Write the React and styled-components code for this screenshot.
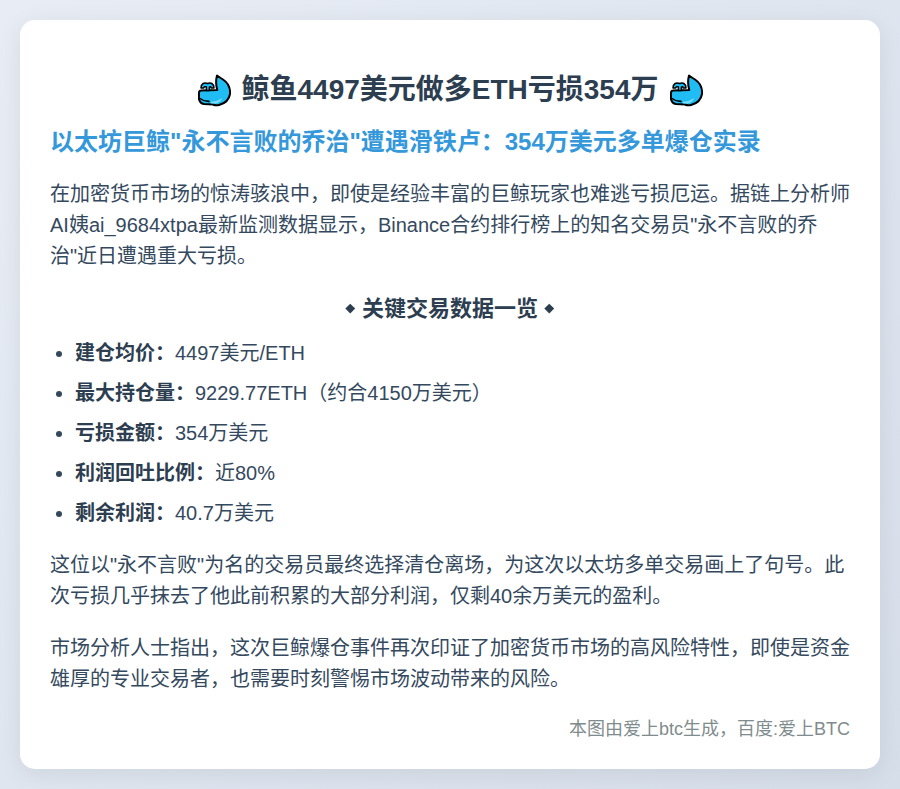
import React from 'react';
import styled, { createGlobalStyle } from 'styled-components';

const GlobalStyle = createGlobalStyle`
  html, body {
    margin: 0;
    padding: 0;
  }
  body {
    min-height: 789px;
    background: linear-gradient(135deg, #e8edf5 0%, #d6deea 100%);
    font-family: "Liberation Sans", "Noto Sans CJK SC", sans-serif;
    color: #34495e;
  }
`;

const Page = styled.div`
  padding: 20px;
  box-sizing: border-box;
  height: 789px;
  overflow: hidden;
`;

const Card = styled.article`
  background: #fff;
  border-radius: 15px;
  box-shadow: 0 5px 25px rgba(0, 0, 0, 0.08);
  padding: 30px;
  height: 749px;
  box-sizing: border-box;
`;

const Title = styled.h1`
  margin: 20px 0 0;
  height: 40px;
  display: flex;
  justify-content: center;
  align-items: center;
  gap: 10px;
  font-size: 28px;
  line-height: 40px;
  font-weight: 700;
  color: #2c3e50;
`;

const Subtitle = styled.h2`
  margin: 16px 0 0;
  font-size: 24px;
  line-height: 32px;
  font-weight: 700;
  color: #3498db;
`;

const Text = styled.p`
  margin: ${(p) => p.$top}px 0 0;
  font-size: 20px;
  line-height: 31px;
`;

const SectionTitle = styled.h3`
  margin: 22px 0 0;
  display: flex;
  justify-content: center;
  align-items: center;
  gap: 8px;
  font-size: 22px;
  line-height: 29px;
  font-weight: 700;
  color: #2c3e50;
`;

const Diamond = styled.span`
  width: 6.5px;
  height: 6.5px;
  background: #2c3e50;
  transform: rotate(45deg);
`;

const List = styled.ul`
  margin: 15px 0 0;
  padding: 0 0 0 25px;
  list-style: disc;
`;

const Item = styled.li`
  font-size: 20px;
  line-height: 30px;
  margin-bottom: 10px;
  strong {
    color: #2c3e50;
  }
`;

const Footer = styled.p`
  margin: 21px 0 0;
  font-size: 18px;
  line-height: 26px;
  text-align: right;
  color: #7f8c8d;
`;

const Whale = () => (
  <svg width="34" height="33" viewBox="0 0 34 33">
    <path d="M20 1.5 C18.8 6 18.8 11 20.3 16 L4 16.5 C2.5 16.5 2 17.5 2 19 L2 25 C2.5 28 4 29.5 7 30 L16 30.5 C18 31.5 20 31.5 22 31 C28 29.5 32 26 33 20 C33.5 14 30.5 8.5 26 5.5 C24 4.3 22 3 20 1.5 Z" fill="#1fbdf3" stroke="#000" strokeWidth="2" strokeLinejoin="round" />
    <path d="M4 14 C4 9.5 7.5 8 10.5 9.5 C13.5 8 17 9.5 17 14 L14.4 14 C14 12.6 13.2 12.4 12.4 13 L12.4 16.5 L9.4 16.5 L9.4 13 C8.4 12.4 7 12.6 6.6 14 Z" fill="#1fbdf3" stroke="#000" strokeWidth="1.5" strokeLinejoin="round" />
    <path d="M14 27.8 C18 27.6 22 26.4 25 24 C24.5 26.8 22 29 18.5 29.5 L14 29.5 Z" fill="#7fdcf8" />
    <path d="M3 24.5 C5.5 26.5 8.5 27.5 12 27.4" fill="none" stroke="#000" strokeWidth="1.6" strokeLinecap="round" />
  </svg>
);

const items = [
  ['建仓均价：', '4497美元/ETH'],
  ['最大持仓量：', '9229.77ETH（约合4150万美元）'],
  ['亏损金额：', '354万美元'],
  ['利润回吐比例：', '近80%'],
  ['剩余利润：', '40.7万美元'],
];

export default function App() {
  return (
    <>
      <GlobalStyle />
      <Page>
        <Card>
          <Title>
            <Whale />
            <span>鲸鱼4497美元做多ETH亏损354万</span>
            <Whale />
          </Title>
          <Subtitle>以太坊巨鲸"永不言败的乔治"遭遇滑铁卢：354万美元多单爆仓实录</Subtitle>
          <Text $top={21}>
            在加密货币市场的惊涛骇浪中，即使是经验丰富的巨鲸玩家也难逃亏损厄运。据链上分析师AI姨ai_9684xtpa最新监测数据显示，Binance合约排行榜上的知名交易员"永不言败的乔治"近日遭遇重大亏损。
          </Text>
          <SectionTitle>
            <Diamond />
            <span>关键交易数据一览</span>
            <Diamond />
          </SectionTitle>
          <List>
            {items.map(([label, value]) => (
              <Item key={label}>
                <strong>{label}</strong>
                {value}
              </Item>
            ))}
          </List>
          <Text $top={22}>
            这位以"永不言败"为名的交易员最终选择清仓离场，为这次以太坊多单交易画上了句号。此次亏损几乎抹去了他此前积累的大部分利润，仅剩40余万美元的盈利。
          </Text>
          <Text $top={21}>
            市场分析人士指出，这次巨鲸爆仓事件再次印证了加密货币市场的高风险特性，即使是资金雄厚的专业交易者，也需要时刻警惕市场波动带来的风险。
          </Text>
          <Footer>本图由爱上btc生成，百度:爱上BTC</Footer>
        </Card>
      </Page>
    </>
  );
}
